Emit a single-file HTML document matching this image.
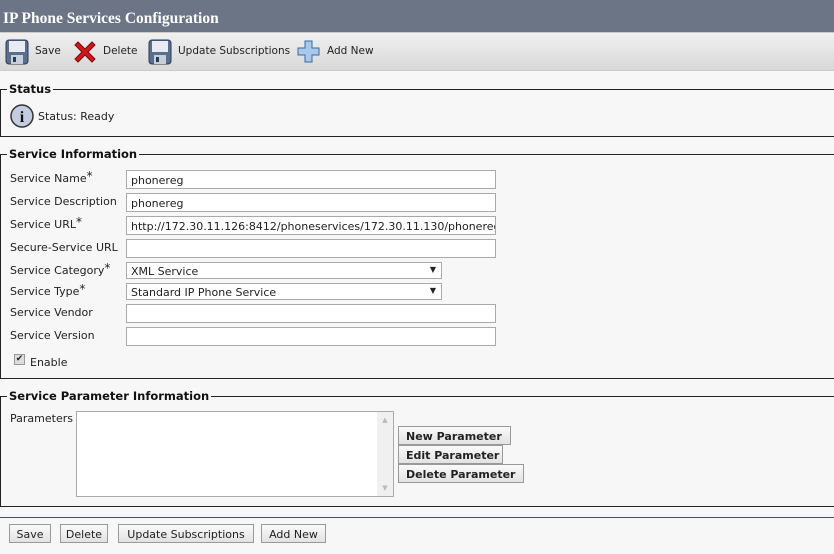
<!DOCTYPE html>
<html><head><style>
*{box-sizing:border-box;margin:0;padding:0}
body{width:834px;height:554px;background:#f7f7f7;font-family:"DejaVu Sans","Liberation Sans",sans-serif;font-size:11px;color:#222;position:relative;overflow:hidden}
.a{position:absolute;white-space:nowrap}
.hdr{left:0;top:0;width:834px;height:33px;background:#6b7585;color:#fff;font-family:"Liberation Serif",serif;font-weight:bold;font-size:15.5px;padding:10px 0 0 3px;border-bottom:1px solid #ccc}
.tb{left:0;top:33px;width:834px;height:38px;background:linear-gradient(#f0f0f0,#d8d8d8);border-bottom:1px solid #ccc;font-size:10.5px}
.fs{position:absolute;left:0;width:840px;border:1px solid #222;border-right:none}
.lg{position:absolute;top:-8px;left:6px;background:#f7f7f7;font-weight:bold;font-size:11.5px;padding:0 2px;color:#111}
.in{position:absolute;left:126px;width:370px;height:19px;border:1px solid #aaa;background:#fff;padding:3px 4px 0;font-size:11px;overflow:hidden;white-space:nowrap}
.sel{width:316px;height:17px;padding:2px 4px 0}
.sel:after{content:"\25BC";position:absolute;right:5px;top:2px;font-size:8px}
.lb{position:absolute;left:10px;font-size:11px}
.lb sup{font-size:12px;vertical-align:top;position:relative;top:-3px}
.btn{position:absolute;height:19px;border:1px solid #999;background:linear-gradient(#fafafa,#e2e2e2);font-size:11px;text-align:center;padding-top:3px}
.pb{font-weight:bold;left:398px;text-align:left;padding-left:7px}
</style></head><body>
<div class="a hdr">IP Phone Services Configuration</div>
<div class="a tb">
<svg class="a" style="left:5px;top:6px" width="24" height="26" viewBox="0 0 24 26"><rect x="1" y="1" width="22" height="24" rx="3" fill="#5a6f8e" stroke="#2d3a55"/><rect x="4" y="2" width="16" height="11" fill="#e8ecf2"/><rect x="6" y="16" width="12" height="9" fill="#c7cfdb"/><rect x="8" y="18" width="3" height="5" fill="#2d3a55"/></svg>
<div class="a" style="left:35px;top:12px">Save</div>
<svg class="a" style="left:72px;top:6px" width="26" height="26" viewBox="0 0 26 26"><path d="M3 6 L6 3 L13 10 L20 3 L23 6 L16 13 L23 20 L20 23 L13 16 L6 23 L3 20 L10 13Z" fill="#d0181c" stroke="#7a0a0a"/></svg>
<div class="a" style="left:103px;top:12px">Delete</div>
<svg class="a" style="left:148px;top:6px" width="24" height="26" viewBox="0 0 24 26"><rect x="1" y="1" width="22" height="24" rx="3" fill="#5a6f8e" stroke="#2d3a55"/><rect x="4" y="2" width="16" height="11" fill="#e8ecf2"/><rect x="6" y="16" width="12" height="9" fill="#c7cfdb"/><rect x="8" y="18" width="3" height="5" fill="#2d3a55"/></svg>
<div class="a" style="left:178px;top:12px">Update Subscriptions</div>
<svg class="a" style="left:297px;top:7px" width="24" height="24" viewBox="0 0 24 24"><path d="M8 1 H15 V8 H22 V15 H15 V22 H8 V15 H1 V8 H8Z" fill="#a8c8ec" stroke="#3c6aa0"/></svg>
<div class="a" style="left:327px;top:12px">Add New</div>
</div>

<div class="fs" style="top:89px;height:48px"><div class="lg">Status</div></div>
<svg class="a" style="left:10px;top:104px" width="24" height="24" viewBox="0 0 24 24"><circle cx="12" cy="12" r="11" fill="#c4cde0" stroke="#333" stroke-width="1.5"/><text x="12" y="18" text-anchor="middle" font-family="Liberation Serif" font-weight="bold" font-size="16" fill="#111">i</text></svg>
<div class="a" style="left:38px;top:110px">Status: Ready</div>

<div class="fs" style="top:154px;height:225px"><div class="lg">Service Information</div></div>
<div class="lb" style="top:172px">Service Name<sup>*</sup></div>
<div class="lb" style="top:195px">Service Description</div>
<div class="lb" style="top:218px">Service URL<sup>*</sup></div>
<div class="lb" style="top:241px">Secure-Service URL</div>
<div class="lb" style="top:264px">Service Category<sup>*</sup></div>
<div class="lb" style="top:285px">Service Type<sup>*</sup></div>
<div class="lb" style="top:306px">Service Vendor</div>
<div class="lb" style="top:329px">Service Version</div>
<div class="in" style="top:170px">phonereg</div>
<div class="in" style="top:193px">phonereg</div>
<div class="in" style="top:216px">http://172.30.11.126:8412/phoneservices/172.30.11.130/phonereg</div>
<div class="in" style="top:239px"></div>
<div class="in sel" style="top:262px">XML Service</div>
<div class="in sel" style="top:283px">Standard IP Phone Service</div>
<div class="in" style="top:304px"></div>
<div class="in" style="top:327px"></div>
<div class="a" style="left:14px;top:354px;width:11px;height:11px;border:1px solid #999;background:#ddd;font-size:9px;line-height:9px;text-align:center">✔</div>
<div class="a" style="left:30px;top:356px">Enable</div>

<div class="fs" style="top:396px;height:111px"><div class="lg">Service Parameter Information</div></div>
<div class="lb" style="top:412px">Parameters</div>
<div class="a" style="left:76px;top:411px;width:318px;height:86px;border:1px solid #aaa;background:#fff"><div style="position:absolute;right:0;top:0;width:16px;height:84px;background:#f0f0f0;color:#bbb;font-size:7px;text-align:center"><div style="margin-top:4px">▲</div><div style="margin-top:60px">▼</div></div></div>
<div class="btn pb" style="top:426px;width:113px">New Parameter</div>
<div class="btn pb" style="top:445px;width:105px">Edit Parameter</div>
<div class="btn pb" style="top:464px;width:126px">Delete Parameter</div>

<div class="a" style="left:0;top:517px;width:834px;height:1px;background:#456"></div>
<div class="btn" style="left:9px;top:524px;width:42px">Save</div>
<div class="btn" style="left:60px;top:524px;width:48px">Delete</div>
<div class="btn" style="left:118px;top:524px;width:136px">Update Subscriptions</div>
<div class="btn" style="left:261px;top:524px;width:65px">Add New</div>
</body></html>
